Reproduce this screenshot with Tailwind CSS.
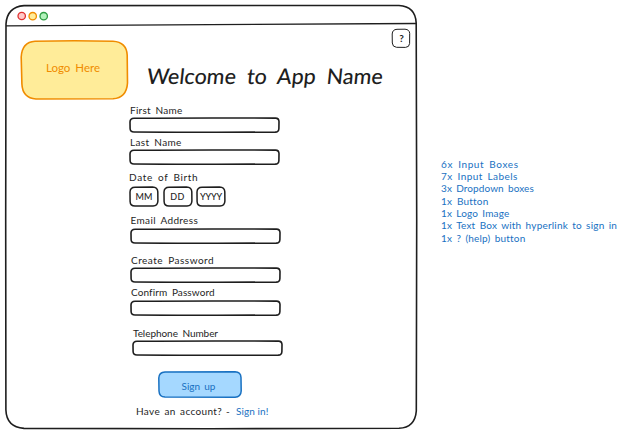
<!DOCTYPE html>
<html lang="en">
<head>
<meta charset="utf-8">
<title>Sign up wireframe</title>
<script src="https://cdn.jsdelivr.net/npm/@tailwindcss/browser@4"></script>
</head>
<body class="bg-white">
<svg class="hidden">
  <symbol id="field" viewBox="0 0 152 16"><path d="M5 1.2Q70 .8 146.500 1.1Q149.900 1.1 150 4.6L149.900 11.4Q149.800 15 146.100 15.1Q80 15.4 5 15Q1.1 15 1.1 11.5L1 5Q1.1 1.2 5 1.2Z" fill="none" stroke="#1e1e1e" stroke-width="1.6"/></symbol>
  <symbol id="drop" viewBox="0 0 30 21"><path d="M6 1.2L23.5 1Q28.6 1.1 28.8 5.8L28.9 15Q28.7 19.8 24 20L6 20.1Q1.2 20 1.1 15.5L1 6Q1.2 1.2 6 1.2Z" fill="none" stroke="#1e1e1e" stroke-width="1.5"/></symbol>
</svg>
<div class="relative flex h-[435px] w-[624px] overflow-hidden font-['Excalifont','Virgil','Lato',sans-serif] text-[10px] leading-[12px] whitespace-nowrap text-[#1e1e1e]">
  <svg class="absolute inset-0" width="624" height="435" fill="none" stroke="#1e1e1e" stroke-width="1.6">
    <path d="M24 5.6Q210 5.2 399 5.5Q415.5 6.500 416.200 23L416.700 220L416.300 411Q415 427.600 399 428.300L210 428.700L24 428.400Q6.500 427 5.900 410L5.700 220L6 24Q7 7 24 5.600Z"/>
    <path d="M6 25.800Q110 25.300 210 24.600T416 23.500" stroke-width="1.300"/>
  </svg>
  <main class="relative flex w-[417px] flex-col">
    <header class="flex h-[26px] items-start gap-[2px] pt-[11px] pl-[16.500px]">
      <svg width="9" height="10"><circle cx="4.700" cy="5" r="3.700" fill="#ffc9c9" stroke="#e03131" stroke-width="1.300"/></svg>
      <svg width="9" height="10"><circle cx="4.700" cy="5.200" r="3.700" fill="#ffec99" stroke="#f08c00" stroke-width="1.300"/></svg>
      <svg width="9" height="10"><circle cx="4.700" cy="5.200" r="3.700" fill="#b2f2bb" stroke="#2f9e44" stroke-width="1.300"/></svg>
    </header>
    <section class="flex h-[78px] items-start">
      <div class="mt-[14px] ml-[20px] grid h-[60px] w-[109px] shrink-0">
        <svg class="col-start-1 row-start-1" width="109" height="60"><path d="M15 1.200Q55 .4 93 1.200Q106.500 2 107.200 15L107.500 43Q106.500 58 93 58.800L16 59Q2.500 58 1.900 44L1.200 17Q2 2 15 1.200Z" fill="#ffec99" stroke="#f08c00" stroke-width="1.600"/></svg>
        <span class="z-10 col-start-1 row-start-1 pt-[22px] pl-[26px] text-[11.500px] [word-spacing:2px] text-[#f08c00]">Logo Here</span>
      </div>
      <h1 class="mt-[35px] ml-[18px] w-[235px] -skew-x-6 text-[21.500px] leading-[30px] font-medium [word-spacing:5.500px]">Welcome to App Name</h1>
      <button class="mt-[1px] ml-[9px] grid h-[22px] w-[20px] shrink-0 place-items-center">
        <svg class="col-start-1 row-start-1" width="20" height="22"><path d="M6 2.300L14 2.200Q18.500 2.500 18.700 6.500L18.600 16.500Q18.400 20.200 14.500 20.400L5.500 20.300Q1.500 20 1.300 16L1.200 7Q1.400 2.500 6 2.300Z" fill="none" stroke="#1e1e1e"/></svg>
        <span class="col-start-1 row-start-1 pl-[1px] font-bold">?</span>
      </button>
    </section>
    <form class="flex flex-col items-start pl-[129px]">
      <label class="pl-[1px] tracking-[0.250px] [word-spacing:2px]">First Name</label>
      <svg class="mt-[1px]" width="152" height="16"><use href="#field"/></svg>
      <label class="mt-[3px] pl-[1px] tracking-[0.350px] [word-spacing:2px]">Last Name</label>
      <svg class="mt-[1px]" width="152" height="16"><use href="#field"/></svg>
      <label class="mt-[6px] tracking-[0.650px] [word-spacing:2px]">Date of Birth</label>
      <div class="mt-[3px] flex gap-[3.500px] text-[9px]">
        <div class="grid h-[21px] w-[30px] place-items-center"><svg class="col-start-1 row-start-1" width="30" height="21"><use href="#drop"/></svg><span class="col-start-1 row-start-1 font-medium">MM</span></div>
        <div class="grid h-[21px] w-[30px] place-items-center"><svg class="col-start-1 row-start-1" width="30" height="21"><use href="#drop"/></svg><span class="col-start-1 row-start-1 font-medium tracking-[.5px]">DD</span></div>
        <div class="grid h-[21px] w-[30px] place-items-center"><svg class="col-start-1 row-start-1" width="30" height="21"><use href="#drop"/></svg><span class="col-start-1 row-start-1 font-medium tracking-[-0.200px]">YYYY</span></div>
      </div>
      <label class="mt-[7px] pl-[1.500px] tracking-[0.350px] [word-spacing:2px]">Email Address</label>
      <svg class="mt-[2px] ml-[.5px]" width="152" height="16"><use href="#field"/></svg>
      <label class="mt-[9.500px] pl-[2px] tracking-[0.500px] [word-spacing:2px]">Create Password</label>
      <svg class="mt-[1.500px] ml-[.5px]" width="152" height="16"><use href="#field"/></svg>
      <label class="mt-[3px] pl-[2px] tracking-[0.100px] [word-spacing:2px]">Confirm Password</label>
      <svg class="mt-[1.500px] ml-[.5px]" width="152" height="16"><use href="#field"/></svg>
      <label class="mt-[11px] pl-[4px] tracking-[-0.050px] [word-spacing:2px]">Telephone Number</label>
      <svg class="mt-[1.500px] ml-[3px]" width="152" height="16"><use href="#field"/></svg>
      <button type="button" class="mt-[15px] ml-[29px] grid h-[27px] w-[84px]">
        <svg class="col-start-1 row-start-1" width="84" height="27"><path d="M7 .9L77 .8Q82.800 1 83 6.500L83.200 20Q82.900 26 77 26.200L7 26.100Q1.200 25.900 1 20L.8 7Q1 1.200 7 .9Z" fill="#a5d8ff" stroke="#1971c2" stroke-width="1.500"/></svg>
        <span class="z-10 col-start-1 row-start-1 pt-[9px] pr-[3px] text-center text-[10px] [word-spacing:1.500px] text-[#1971c2]">Sign up</span>
      </button>
      <p class="mt-[7px] flex pl-[7px]"><span class="w-[90px] tracking-[0.350px] [word-spacing:1.500px]">Have an account?</span><span class="w-[10px]">-</span><a class="tracking-[0.100px] text-[#1971c2]">Sign in!</a></p>
    </form>
  </main>
  <ul class="pt-[157.500px] pl-[24px] leading-[12.350px] text-[#1971c2]">
    <li class="tracking-[0.600px] [word-spacing:2px]">6x Input Boxes</li>
    <li class="tracking-[0.400px] [word-spacing:2px]">7x Input Labels</li>
    <li class="tracking-[0.100px] [word-spacing:1.500px]">3x Dropdown boxes</li>
    <li class="tracking-[0.200px] [word-spacing:2px]">1x Button</li>
    <li class="tracking-[0.150px] [word-spacing:1.500px]">1x Logo Image</li>
    <li class="tracking-[0.200px] [word-spacing:1.500px]">1x Text Box with hyperlink to sign in</li>
    <li class="tracking-[0.200px] [word-spacing:1.500px]">1x ? (help) button</li>
  </ul>
</div>
</body>
</html>
